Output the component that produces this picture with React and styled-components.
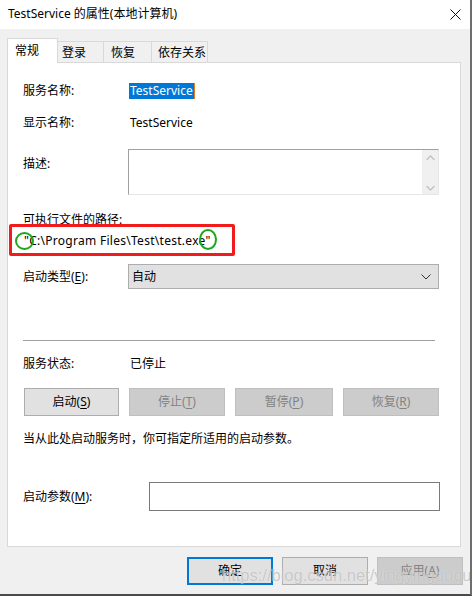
import React from "react";
import styled, { createGlobalStyle } from "styled-components";

const Global = createGlobalStyle`
  html, body { margin: 0; padding: 0; background: #f0f0f0; }
  body {
    font-family: "Noto Sans", "Noto Sans CJK SC", sans-serif;
    font-size: 12px;
    line-height: 16px;
    color: #000;
  }
  * { box-sizing: border-box; }
`;

const Window = styled.div`
  position: relative;
  width: 472px;
  height: 596px;
  background: #f0f0f0;
  border-right: 2px solid #6e6e6e;
  border-bottom: 2px solid #4a4a4a;
  display: flex;
  flex-direction: column;
  overflow: hidden;
`;

const TitleBar = styled.div`
  height: 29px;
  background: #fff;
  display: flex;
  align-items: center;
  justify-content: space-between;
  padding: 0 9px 0 8px;
  flex-shrink: 0;
`;

const Title = styled.span`
  font-size: 12px;
  line-height: 16px;
  margin-top: -2px;
`;

const Body = styled.div`
  padding: 9px 0 0 7px;
  display: flex;
  flex-direction: column;
`;

const TabStrip = styled.div`
  display: flex;
  align-items: flex-end;
  height: 24px;
`;

const Tab = styled.div`
  position: relative;
  width: ${(p) => p.$w}px;
  padding-left: ${(p) => p.$pl}px;
  height: ${(p) => (p.$active ? 25 : 21)}px;
  margin-bottom: ${(p) => (p.$active ? -1 : 0)}px;
  z-index: ${(p) => (p.$active ? 2 : 1)};
  background: ${(p) => (p.$active ? "#fff" : "#f0f0f0")};
  border: 1px solid #d9d9d9;
  border-bottom: none;
  border-left: ${(p) => (p.$first || p.$active ? "1px solid #d9d9d9" : "none")};
  display: flex;
  align-items: center;
  padding-top: ${(p) => (p.$active ? 0 : 1)}px;
`;

const Panel = styled.div`
  width: 454px;
  height: 485px;
  background: #fff;
  border: 1px solid #d9d9d9;
  padding: 20px 21px 0 15px;
  display: flex;
  flex-direction: column;
`;

const Row = styled.div`
  display: grid;
  grid-template-columns: 105px 1fr;
  align-items: ${(p) => (p.$top ? "start" : "center")};
  margin-top: ${(p) => p.$mt || 0}px;
`;

const Label = styled.span`
  margin-top: ${(p) => p.$mt || 0}px;
`;

const Selected = styled.span`
  justify-self: start;
  margin-left: 1px;
  background: #0078d7;
  color: #fff;
  padding: 0 1px 0 1px;
  height: 16px;
  border-right: 1px solid #e07a1f;
`;

const Value = styled.span`
  margin-left: 2px;
`;

const TextArea = styled.div`
  height: 46px;
  border: 1px solid #a0a0a0;
  border-right-color: #e6e6e6;
  border-bottom-color: #e6e6e6;
  display: flex;
  justify-content: flex-end;
`;

const ScrollBar = styled.div`
  width: 16px;
  background: #f0f0f0;
  display: flex;
  flex-direction: column;
  align-items: center;
  justify-content: space-between;
  padding: 5px 0 3px;
`;

const Line = styled.div`
  margin-top: ${(p) => p.$mt || 0}px;
  position: relative;
`;

const PathText = styled.span`
  margin-left: 1px;
  letter-spacing: 0.28px;
  position: relative;
  z-index: 1;
`;

const RedBox = styled.span`
  position: absolute;
  left: -14px;
  top: -9px;
  width: 226px;
  height: 32px;
  border: 3px solid #f21b1b;
  border-radius: 2px;
`;

const Circle = styled.span`
  position: absolute;
  left: ${(p) => p.$x}px;
  top: ${(p) => p.$y}px;
  width: ${(p) => p.$w}px;
  height: ${(p) => p.$h}px;
  border: 2px solid #1fa61f;
  border-radius: 50%;
  z-index: 2;
`;

const Combo = styled.div`
  height: 25px;
  background: #e1e1e1;
  border: 1px solid #adadad;
  display: flex;
  align-items: center;
  justify-content: space-between;
  padding: 0 7px 0 3px;
`;

const Separator = styled.div`
  margin-top: ${(p) => p.$mt}px;
  height: 1px;
  width: 412px;
  background: #a0a0a0;
`;

const ButtonRow = styled.div`
  margin-top: ${(p) => p.$mt}px;
  margin-left: 1px;
  display: grid;
  grid-template-columns: 95px 96px 98px 96px;
  column-gap: 10px;
  justify-content: space-between;
`;

const Btn = styled.div`
  height: 28px;
  background: ${(p) => (p.$disabled ? "#cccccc" : "#e1e1e1")};
  border: ${(p) => (p.$default ? "2px solid #0078d7" : p.$disabled ? "1px solid #bfbfbf" : "1px solid #adadad")};
  color: ${(p) => (p.$disabled ? "#838383" : "#000")};
  display: flex;
  align-items: center;
  justify-content: center;
  width: ${(p) => (p.$w ? p.$w + "px" : "auto")};
`;

const Key = styled.span`
  text-decoration: underline;
  text-underline-offset: 2px;
`;

const Hint = styled.div`
  margin-top: ${(p) => p.$mt}px;
`;

const ParamRow = styled.div`
  margin-top: ${(p) => p.$mt}px;
  display: grid;
  grid-template-columns: 126px 291px;
  align-items: center;
`;

const Input = styled.div`
  height: 29px;
  border: 1px solid #7a7a7a;
  background: #fff;
`;

const Footer = styled.div`
  display: flex;
  justify-content: flex-end;
  gap: 9px;
  padding: 10px 7px 0 0;
`;

const Watermark = styled.div`
  position: absolute;
  left: 222px;
  top: 565px;
  font-family: "Liberation Sans", Arial, sans-serif;
  font-size: 16.5px;
  line-height: 20px;
  color: rgba(160, 160, 160, 0.55);
  text-shadow: 0 0 1px rgba(255, 255, 255, 0.8);
  white-space: nowrap;
  pointer-events: none;
  z-index: 5;
`;

const Chevron = ({ up }) => (
  <svg width="9" height="6" viewBox="0 0 9 6">
    <path
      d={up ? "M0.5 5 L4.5 1 L8.5 5" : "M0.5 1 L4.5 5 L8.5 1"}
      fill="none"
      stroke="#c2c2c2"
      strokeWidth="1.3"
    />
  </svg>
);

export default function App() {
  return (
    <>
      <Global />
      <Window>
        <TitleBar>
          <Title>TestService 的属性(本地计算机)</Title>
          <svg width="11" height="11" viewBox="0 0 11 11">
            <path d="M0.5 0.5 L10.5 10.5 M10.5 0.5 L0.5 10.5" stroke="#111" strokeWidth="1" />
          </svg>
        </TitleBar>
        <Body>
          <TabStrip>
            <Tab $active $w={51} $pl={7}>常规</Tab>
            <Tab $w={46} $pl={4}>登录</Tab>
            <Tab $w={48} $pl={7}>恢复</Tab>
            <Tab $w={56} $pl={6}>依存关系</Tab>
          </TabStrip>
          <Panel>
            <Row>
              <Label>服务名称:</Label>
              <Selected>TestService</Selected>
            </Row>
            <Row $mt={16}>
              <Label>显示名称:</Label>
              <Value>TestService</Value>
            </Row>
            <Row $mt={18} $top>
              <Label $mt={7}>描述:</Label>
              <TextArea>
                <ScrollBar>
                  <Chevron up />
                  <Chevron />
                </ScrollBar>
              </TextArea>
            </Row>
            <Line $mt={17}>可执行文件的路径:</Line>
            <Line $mt={5}>
              <RedBox />
              <Circle $x={-8} $y={-1} $w={19} $h={18} />
              <Circle $x={176} $y={-4} $w={18} $h={21} />
              <PathText>"C:\Program Files\Test\test.exe"</PathText>
            </Line>
            <Row $mt={15}>
              <Label>
                启动类型(<Key>E</Key>):
              </Label>
              <Combo>
                <span>自动</span>
                <svg width="10" height="6" viewBox="0 0 10 6">
                  <path d="M0.5 0.5 L5 5 L9.5 0.5" fill="none" stroke="#333" strokeWidth="1" />
                </svg>
              </Combo>
            </Row>
            <Separator $mt={51} />
            <Row $mt={15}>
              <Label>服务状态:</Label>
              <Value>已停止</Value>
            </Row>
            <ButtonRow $mt={16}>
              <Btn>
                启动(<Key>S</Key>)
              </Btn>
              <Btn $disabled>
                停止(<Key>T</Key>)
              </Btn>
              <Btn $disabled>
                暂停(<Key>P</Key>)
              </Btn>
              <Btn $disabled>
                恢复(<Key>R</Key>)
              </Btn>
            </ButtonRow>
            <Hint $mt={15}>当从此处启动服务时，你可指定所适用的启动参数。</Hint>
            <ParamRow $mt={35}>
              <Label>
                启动参数(<Key>M</Key>):
              </Label>
              <Input />
            </ParamRow>
          </Panel>
        </Body>
        <Footer>
          <Btn $default $w={86}>确定</Btn>
          <Btn $w={86}>取消</Btn>
          <Btn $disabled $w={86}>
            应用(<Key>A</Key>)
          </Btn>
        </Footer>
        <Watermark>https://blog.csdn.net/yingyingququ</Watermark>
      </Window>
    </>
  );
}
